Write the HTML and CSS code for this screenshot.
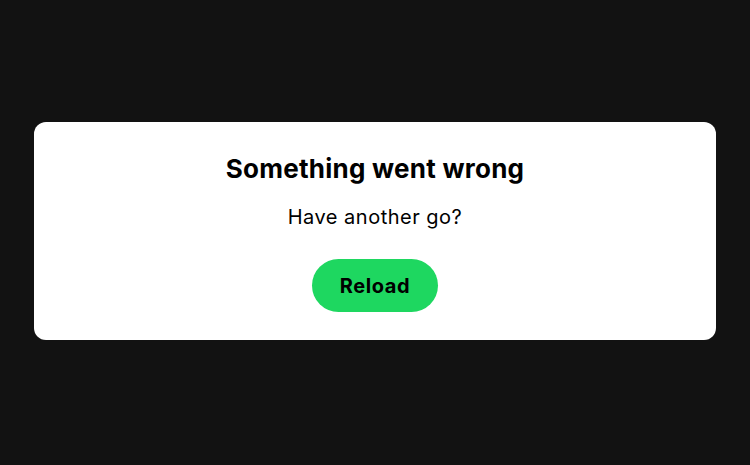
FILE: index.html
```html
<!DOCTYPE html>
<html lang="en">
<head>
<meta charset="utf-8">
<title>Error</title>
<link rel="stylesheet" href="styles.css">
</head>
<body>
<main class="page">
  <section class="card">
    <h1 class="title">Something went wrong</h1>
    <p class="subtitle">Have another go?</p>
    <button class="reload" type="button">Reload</button>
  </section>
</main>
</body>
</html>
```

FILE: styles.css
```css
html, body {
  margin: 0;
  padding: 0;
  background: #121212;
}
.page {
  box-sizing: border-box;
  min-height: 465px;
  height: 100vh;
  display: flex;
  align-items: center;
  justify-content: center;
  padding: 0 34px;
  font-family: Inter, "Liberation Sans", sans-serif;
}
.card {
  box-sizing: border-box;
  width: 100%;
  height: 218px;
  margin-top: -3px;
  background: #ffffff;
  border-radius: 12px;
  display: flex;
  flex-direction: column;
  align-items: center;
  padding: 31px 24px 28px;
}
.title {
  margin: 0;
  font-size: 26px;
  line-height: 32px;
  font-weight: 700;
  color: #000;
  letter-spacing: 0.25px;
}
.subtitle {
  margin: 20px 0 0;
  font-size: 20px;
  line-height: 24px;
  font-weight: 400;
  color: #000;
  letter-spacing: 0.5px;
}
.reload {
  margin-top: 30px;
  width: 126px;
  height: 53px;
  border: none;
  border-radius: 27px;
  background: #1ed760;
  color: #000;
  font-family: Inter, "Liberation Sans", sans-serif;
  font-size: 20px;
  font-weight: 700;
  letter-spacing: 0.6px;
  cursor: pointer;
}
```
